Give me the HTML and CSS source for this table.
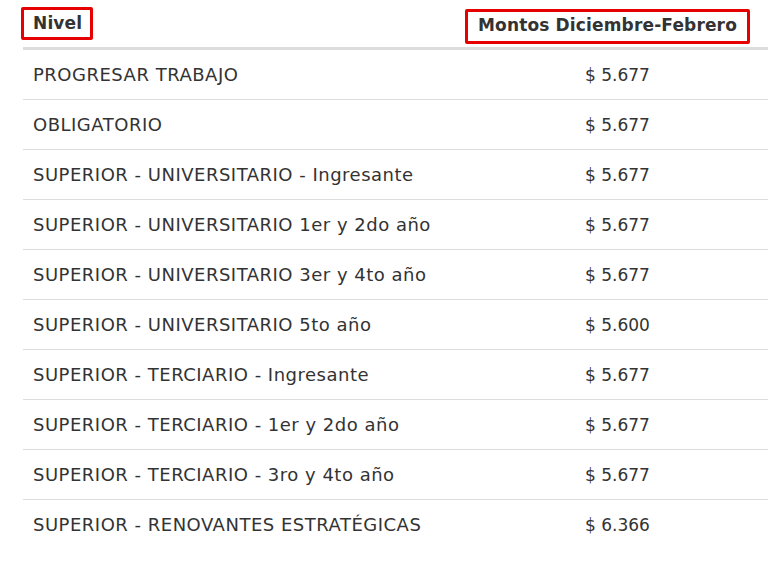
FILE: index.html
```html
<!DOCTYPE html>
<html lang="es">
<head>
<meta charset="utf-8">
<link rel="stylesheet" href="styles.css">
</head>
<body>
<div class="table">
  <div class="row head">
    <div class="c1"><span class="mark mark-nivel">Nivel</span></div>
    <div class="c2"><span class="mark mark-montos">Montos Diciembre-Febrero</span></div>
  </div>
  <div class="row"><div class="c1">PROGRESAR TRABAJO</div><div class="c2">$ 5.677</div></div>
  <div class="row"><div class="c1">OBLIGATORIO</div><div class="c2">$ 5.677</div></div>
  <div class="row"><div class="c1">SUPERIOR - UNIVERSITARIO - Ingresante</div><div class="c2">$ 5.677</div></div>
  <div class="row"><div class="c1">SUPERIOR - UNIVERSITARIO 1er y 2do año</div><div class="c2">$ 5.677</div></div>
  <div class="row"><div class="c1">SUPERIOR - UNIVERSITARIO 3er y 4to año</div><div class="c2">$ 5.677</div></div>
  <div class="row"><div class="c1">SUPERIOR - UNIVERSITARIO 5to año</div><div class="c2">$ 5.600</div></div>
  <div class="row"><div class="c1">SUPERIOR - TERCIARIO - Ingresante</div><div class="c2">$ 5.677</div></div>
  <div class="row"><div class="c1">SUPERIOR - TERCIARIO - 1er y 2do año</div><div class="c2">$ 5.677</div></div>
  <div class="row"><div class="c1">SUPERIOR - TERCIARIO - 3ro y 4to año</div><div class="c2">$ 5.677</div></div>
  <div class="row last"><div class="c1">SUPERIOR - RENOVANTES ESTRATÉGICAS</div><div class="c2">$ 6.366</div></div>
</div>
</body>
</html>
```
FILE: styles.css
```css
html, body {
  margin: 0;
  padding: 0;
  background: #ffffff;
}
body {
  padding: 0 8px 0 23px;
  font-family: "DejaVu Sans", sans-serif;
  font-size: 18px;
  color: #333333;
}
.table {
  width: 745px;
}
.row {
  display: flex;
  align-items: center;
  height: 49px;
  border-bottom: 1px solid #dddddd;
}
.row.last {
  border-bottom: none;
}
.row.head {
  height: 47px;
  border-bottom: 3px solid #dddddd;
  font-weight: 700;
  font-size: 17px;
  letter-spacing: 0.15px;
}
.c1 {
  flex: 0 0 424px;
  padding-left: 10px;
  box-sizing: border-box;
  letter-spacing: 0.5px;
}
.c2 {
  flex: 1;
  text-align: center;
  padding-left: 20px;
  font-size: 17px;
}
.head .c1 {
  padding-left: 0;
  letter-spacing: 0.15px;
}
.head .c2 {
  padding-left: 0;
}
.mark {
  display: inline-block;
  border: 3px solid #e60000;
  border-radius: 2px;
}
.mark-nivel {
  margin-left: -2px;
  padding: 3px 8px 4px 9px;
}
.mark-montos {
  margin-top: 6px;
  padding: 3px 10px 6px 10px;
}
```
